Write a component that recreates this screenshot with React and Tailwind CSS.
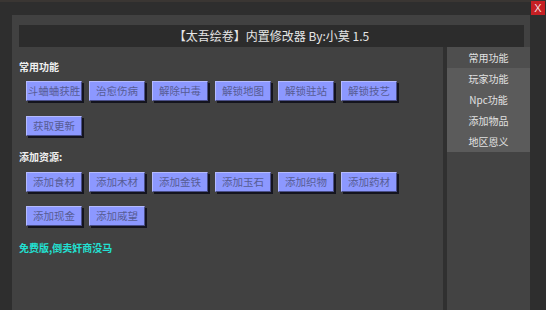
import React from 'react';

const font = { fontFamily: '"Noto Sans CJK SC", "Noto Sans", sans-serif' };

const rows1 = [
  ['斗蛐蛐获胜', '治愈伤病', '解除中毒', '解锁地图', '解锁驻站', '解锁技艺'],
  ['获取更新'],
];
const rows2 = [
  ['添加食材', '添加木材', '添加金铁', '添加玉石', '添加织物', '添加药材'],
  ['添加现金', '添加威望'],
];
const menu = ['常用功能', '玩家功能', 'Npc功能', '添加物品', '地区恩义'];

const Btn = ({ label }) => (
  <button className="w-[56px] h-[20px] bg-[#8c98ff] border border-t-[#b4baff] border-l-[#b4baff] border-r-[#4a4f88] border-b-[#4a4f88] shadow-[2px_2px_0_#14141e] text-[10.5px] leading-none text-[#575c94] flex items-center justify-center">
    {label}
  </button>
);

const Row = ({ items, className }) => (
  <div className={`flex gap-[7px] pl-[14px] ${className}`}>
    {items.map((t) => (
      <Btn key={t} label={t} />
    ))}
  </div>
);

export default function App() {
  return (
    <div className="relative w-[546px] h-[310px] bg-[#2e2e2e] overflow-hidden" style={font}>
      <div className="h-[2px] bg-[#3a3633]" />
      <div className="ml-[12px] mt-[13px] w-[518px] h-[295px] bg-[#414141] pt-[10px] flex flex-col">
        <div className="mx-[7px] w-[505px] h-[22px] bg-[#2c2c2c] flex items-center justify-center text-[12px] text-[#e6e6e6] leading-none">
          【太吾绘卷】内置修改器 By:小莫 1.5
        </div>
        <div className="flex flex-1">
          <div className="w-[431px] pt-[13px]">
            <div className="pl-[7px] h-[14px] text-[10px] leading-[14px] font-bold text-[#f0f0f0]">常用功能</div>
            <Row items={rows1[0]} className="mt-[7px]" />
            <Row items={rows1[1]} className="mt-[15px]" />
            <div className="pl-[7px] mt-[14px] h-[14px] text-[10px] leading-[14px] font-bold text-[#f0f0f0]">添加资源:</div>
            <Row items={rows2[0]} className="mt-[8px]" />
            <Row items={rows2[1]} className="mt-[14px]" />
            <div className="pl-[7px] mt-[15px] h-[14px] text-[10px] leading-[14px] font-bold text-[#22e0d2]">免费版,倒卖奸商没马</div>
          </div>
          <div className="w-[4px] bg-[#303030]" />
          <div className="flex-1 bg-[#434343]">
            {menu.map((m, i) => (
              <div
                key={m}
                className={`h-[21px] flex items-center justify-center text-[10px] text-[#e2e2e2] ${i === 0 ? 'bg-[#4e4e4e]' : 'bg-[#5b5b5b]'}`}
              >
                {m}
              </div>
            ))}
          </div>
        </div>
      </div>
      <div className="absolute left-[531px] top-[1px] w-[14px] h-[14px] bg-[#c62024] flex items-center justify-center text-[11px] leading-none text-[#f4dede]" style={{ fontFamily: '"Liberation Sans", sans-serif' }}>
        X
      </div>
    </div>
  );
}
